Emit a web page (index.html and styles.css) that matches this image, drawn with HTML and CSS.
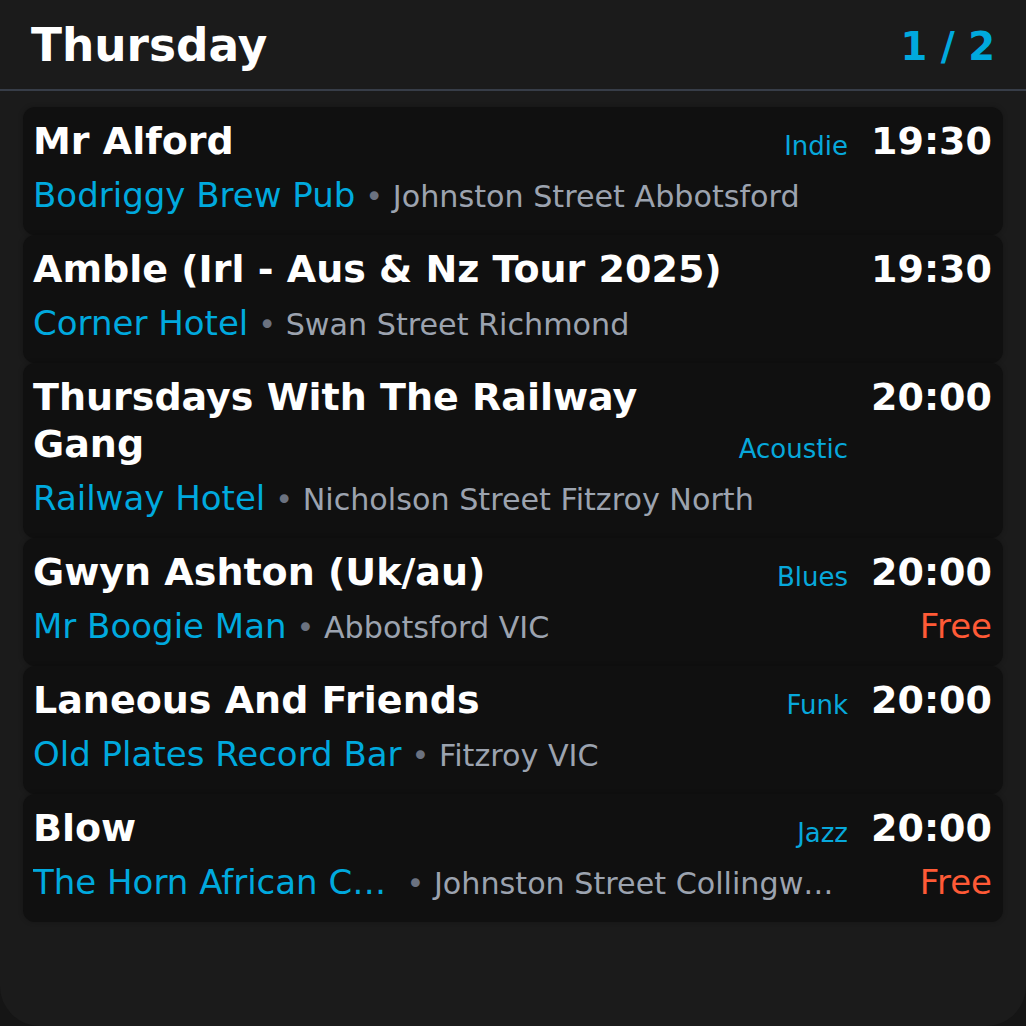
FILE: index.html
```html
<!DOCTYPE html>
<html lang="en">
<head>
<meta charset="utf-8">
<title>Thursday</title>
<link rel="stylesheet" href="styles.css">
</head>
<body>
<div class="panel">
  <header class="head">
    <h1 class="day">Thursday</h1>
    <span class="page">1 / 2</span>
  </header>
  <ul class="list">
    <li class="card">
      <div class="title">Mr Alford</div>
      <div class="genre">Indie</div>
      <div class="time">19:30</div>
      <div class="where"><span class="venue">Bodriggy Brew Pub</span><span class="addr"><span class="dot">•</span> Johnston Street Abbotsford</span></div>
    </li>
    <li class="card">
      <div class="title">Amble (Irl - Aus &amp; Nz Tour 2025)</div>
      <div class="time">19:30</div>
      <div class="where"><span class="venue">Corner Hotel</span><span class="addr"><span class="dot">•</span> Swan Street Richmond</span></div>
    </li>
    <li class="card">
      <div class="title">Thursdays With The Railway Gang</div>
      <div class="genre">Acoustic</div>
      <div class="time">20:00</div>
      <div class="where"><span class="venue">Railway Hotel</span><span class="addr"><span class="dot">•</span> Nicholson Street Fitzroy North</span></div>
    </li>
    <li class="card">
      <div class="title">Gwyn Ashton (Uk/au)</div>
      <div class="genre">Blues</div>
      <div class="time">20:00</div>
      <div class="where"><span class="venue">Mr Boogie Man</span><span class="addr"><span class="dot">•</span> Abbotsford VIC</span></div>
      <div class="price">Free</div>
    </li>
    <li class="card">
      <div class="title">Laneous And Friends</div>
      <div class="genre">Funk</div>
      <div class="time">20:00</div>
      <div class="where"><span class="venue">Old Plates Record Bar</span><span class="addr"><span class="dot">•</span> Fitzroy VIC</span></div>
    </li>
    <li class="card">
      <div class="title">Blow</div>
      <div class="genre">Jazz</div>
      <div class="time">20:00</div>
      <div class="where"><span class="venue">The Horn African Cafe</span><span class="addr"><span class="dot">•</span> Johnston Street Collingwood</span></div>
      <div class="price">Free</div>
    </li>
  </ul>
</div>
</body>
</html>
```
FILE: styles.css
```css
html, body {
  margin: 0;
  padding: 0;
}
body {
  background: #151515;
  font-family: "DejaVu Sans", "Noto Sans", sans-serif;
  color: #ffffff;
}
.panel {
  height: 100vh;
  background: #1b1b1b;
  border-radius: 0 0 40px 40px;
  overflow: hidden;
}
.head {
  display: flex;
  justify-content: space-between;
  align-items: center;
  padding: 20px 31px 17px 31px;
  border-bottom: 2px solid #373d48;
}
.day {
  margin: 0;
  font-size: 45.4px;
  line-height: 52px;
  font-weight: 700;
  color: #ffffff;
}
.page {
  font-size: 38.5px;
  font-weight: 700;
  color: #00a9de;
}
.list {
  list-style: none;
  margin: 16px 23px 0;
  padding: 0;
}
.card {
  display: grid;
  grid-template-columns: minmax(0, 1fr) auto auto;
  column-gap: 23px;
  padding: 11px 11px 16px 10px;
  background: #101010;
  border-radius: 12px;
  box-shadow: 0 0 5px rgba(0, 0, 0, 0.25);
}
.title {
  grid-column: 1;
  grid-row: 1;
  font-size: 38px;
  line-height: 47px;
  font-weight: 700;
  color: #ffffff;
}
.genre {
  grid-column: 2;
  grid-row: 1;
  align-self: end;
  font-size: 26px;
  line-height: 30px;
  margin-bottom: 4px;
  color: #07a8db;
}
.time {
  grid-column: 3;
  grid-row: 1;
  font-size: 38px;
  line-height: 47px;
  font-weight: 700;
  text-align: right;
  color: #ffffff;
}
.where {
  grid-column: 1 / 3;
  grid-row: 2;
  display: flex;
  align-items: baseline;
  min-width: 0;
  margin-top: 8px;
  line-height: 44px;
  white-space: nowrap;
}
.venue {
  flex: 0 1 auto;
  min-width: 0;
  font-size: 34px;
  color: #00a9de;
  overflow: hidden;
  text-overflow: ellipsis;
}
.addr {
  flex: 0 1 auto;
  min-width: 0;
  margin-left: 10px;
  font-size: 30.2px;
  color: #9ca3af;
  overflow: hidden;
  text-overflow: ellipsis;
}
.dot {
  color: #6b7280;
}
.price {
  grid-column: 3;
  grid-row: 2;
  justify-self: end;
  margin-top: 8px;
  line-height: 44px;
  font-size: 34px;
  color: #ff5a36;
}
```
